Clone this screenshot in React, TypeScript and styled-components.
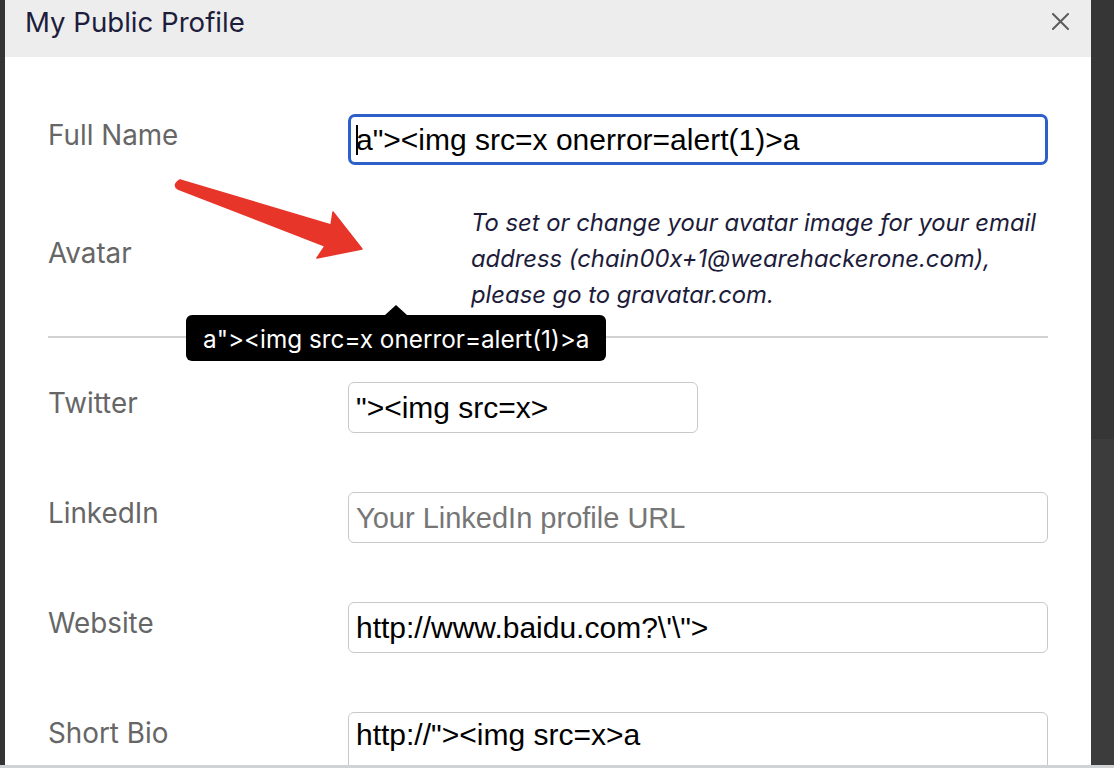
import React from "react";
import styled, { createGlobalStyle, css } from "styled-components";

const GlobalStyle = createGlobalStyle`
  html, body { margin: 0; padding: 0; }
  body { background: #353535; font-family: Inter, "Noto Sans", sans-serif; }
  #root { width: 1114px; height: 768px; overflow: hidden; }
`;

const Frame = styled.div`
  width: 1114px;
  height: 768px;
  display: flex;
  flex-direction: column;
`;

const Workspace = styled.div`
  flex: 1;
  min-height: 0;
  display: flex;
`;

const LeftEdge = styled.div`
  width: 5px;
  background: #333433;
`;

const RightEdge = styled.div`
  width: 23px;
  background: linear-gradient(#353635 0 439px, #3c3c3c 439px);
`;

const BottomBar = styled.div`
  height: 3px;
  background: #d0d2d4;
`;

const Modal = styled.section`
  position: relative;
  flex: 1;
  display: flex;
  flex-direction: column;
  background: #fff;
  overflow: hidden;
`;

const Header = styled.header`
  flex: none;
  height: 57px;
  box-sizing: border-box;
  padding: 0 22px 0 20px;
  background: #ededed;
  display: flex;
  justify-content: space-between;
  align-items: flex-start;
`;

const Title = styled.h2`
  margin: 0;
  font: 400 27.6px/44px Inter, sans-serif;
  color: #1e1d3c;
`;

const CloseButton = styled.button`
  margin-top: 13px;
  width: 17px;
  height: 17px;
  padding: 0;
  border: 0;
  background: none;
  display: flex;
  cursor: pointer;
`;

const Body = styled.div`
  padding: 57px 43px 0 43px;
  display: flex;
  flex-direction: column;
`;

const FieldRow = styled.div<{ $gap: number; $center?: boolean }>`
  display: grid;
  grid-template-columns: 300px 1fr;
  align-items: ${(p) => (p.$center ? "center" : "start")};
  margin-top: ${(p) => p.$gap}px;
`;

const Label = styled.label<{ $lift?: number }>`
  font: 400 27.8px/43px Inter, sans-serif;
  color: #666;
  padding-bottom: ${(p) => (p.$lift ? p.$lift * 2 : 0)}px;
`;

const FieldWrap = styled.div`
  position: relative;
  display: flex;
`;

const fieldBase = css`
  box-sizing: border-box;
  border: 1px solid #c9c9c9;
  border-radius: 6px;
  background: #fff;
  color: #000;
  font: 400 30px "Liberation Sans", Arial, sans-serif;
  outline: none;
  &::placeholder { color: #767676; font-size: 29px; }
`;

const TextInput = styled.input<{ $focused?: boolean; $width?: number }>`
  ${fieldBase}
  height: 51px;
  width: ${(p) => (p.$width ? `${p.$width}px` : "100%")};
  padding: 0 7px;
  ${(p) =>
    p.$focused &&
    css`
      border: 3px solid #2d5fc8;
      border-radius: 7px;
      padding: 0 5px;
    `}
`;

const TextArea = styled.textarea`
  ${fieldBase}
  width: 100%;
  height: 110px;
  padding: 5px 7px;
  resize: none;
`;

const Caret = styled.span`
  position: absolute;
  left: 8px;
  top: 11px;
  width: 2px;
  height: 30px;
  background: #000;
`;

const HelpText = styled.p`
  margin: 0 0 0 123px;
  font: italic 400 23.8px/36px Inter, sans-serif;
  color: #1d1c3a;
  white-space: nowrap;
`;

const Divider = styled.hr`
  margin: 23px 0 0;
  border: 0;
  height: 2px;
  background: #d2d2d2;
`;

const Tooltip = styled.div`
  position: absolute;
  left: 181px;
  top: 315px;
  height: 46px;
  padding: 0 17px;
  background: #000;
  color: #fff;
  border-radius: 6px;
  font: 400 24.3px/48px Inter, sans-serif;
  white-space: nowrap;
  &::before {
    content: "";
    position: absolute;
    left: 50%;
    top: -10px;
    margin-left: -11px;
    border-left: 11px solid transparent;
    border-right: 11px solid transparent;
    border-bottom: 10px solid #000;
  }
`;

const ArrowMark = styled.svg`
  position: absolute;
  left: 155px;
  top: 170px;
`;

export default function App() {
  return (
    <Frame>
      <GlobalStyle />
      <Workspace>
        <LeftEdge />
        <Modal>
          <Header>
            <Title>My Public Profile</Title>
            <CloseButton aria-label="Close">
              <svg width="17" height="17" viewBox="0 0 17 17">
                <path d="M1 1 L16 16 M16 1 L1 16" stroke="#5c5c5c" strokeWidth="2" strokeLinecap="square" fill="none" />
              </svg>
            </CloseButton>
          </Header>
          <Body>
            <FieldRow $gap={0}>
              <Label>Full Name</Label>
              <FieldWrap>
                <TextInput $focused readOnly value={'a"><img src=x onerror=alert(1)>a'} />
                <Caret />
              </FieldWrap>
            </FieldRow>
            <FieldRow $gap={40} $center>
              <Label $lift={6}>Avatar</Label>
              <HelpText>
                To set or change your avatar image for your email
                <br />
                address (chain00x+1@wearehackerone.com),
                <br />
                please go to gravatar.com.
              </HelpText>
            </FieldRow>
            <Divider />
            <FieldRow $gap={44}>
              <Label>Twitter</Label>
              <FieldWrap>
                <TextInput $width={350} readOnly value={'"><img src=x>'} />
              </FieldWrap>
            </FieldRow>
            <FieldRow $gap={59}>
              <Label>LinkedIn</Label>
              <FieldWrap>
                <TextInput readOnly placeholder="Your LinkedIn profile URL" />
              </FieldWrap>
            </FieldRow>
            <FieldRow $gap={59}>
              <Label>Website</Label>
              <FieldWrap>
                <TextInput readOnly value={'http://www.baidu.com?\\\'\\">'} />
              </FieldWrap>
            </FieldRow>
            <FieldRow $gap={59}>
              <Label>Short Bio</Label>
              <FieldWrap>
                <TextArea readOnly value={'http://"><img src=x>a'} />
              </FieldWrap>
            </FieldRow>
          </Body>
          <ArrowMark width="220" height="100" viewBox="160 170 220 100">
            <path
              d="M180 180 L331 225 L333 212 L362 249 L317 258 L325 246 L178 189 Q172 185 180 180 Z"
              fill="#e8352a"
              stroke="#e8352a"
              strokeWidth="1.5"
              strokeLinejoin="round"
            />
          </ArrowMark>
          <Tooltip>{'a"><img src=x onerror=alert(1)>a'}</Tooltip>
        </Modal>
        <RightEdge />
      </Workspace>
      <BottomBar />
    </Frame>
  );
}
